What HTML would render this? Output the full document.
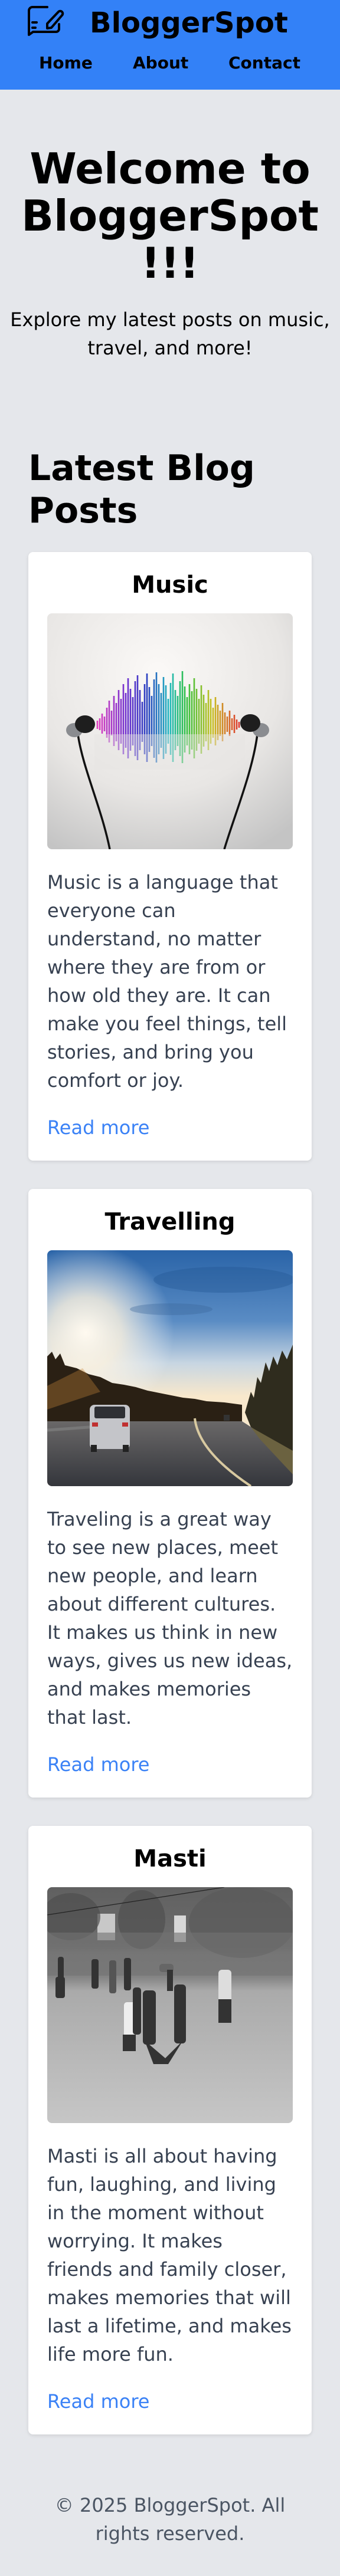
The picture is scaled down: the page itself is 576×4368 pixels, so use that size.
<!DOCTYPE html>
<html><head><meta charset="utf-8">
<style>
*{box-sizing:border-box}
html,body{margin:0;padding:0}
body{width:576px;height:4368px;background:#e5e7eb;font-family:"DejaVu Sans","Liberation Sans",sans-serif;color:#000;overflow:hidden}
header{position:relative;height:152px;background:#3381f7}
.logo{position:absolute;left:40px;top:4px}
.title{position:absolute;left:152px;top:15px;font-size:48px;line-height:48px;font-weight:bold;margin:0}
.nav a{position:absolute;top:93px;font-size:28px;line-height:28px;font-weight:bold;color:#000;text-decoration:none}
.hero{padding:94px 16px 0;text-align:center}
.hero h1{margin:0;font-size:72px;line-height:80px;font-weight:bold}
.hero p{margin:32px 0 0;font-size:32px;line-height:48px}
.sec{padding:0 48px}
.sec>h2{margin:144px 0 34px;font-size:60px;line-height:72px;font-weight:bold}
.card{background:#fff;border-radius:8px;padding:32px;margin-bottom:48px;box-shadow:0 2px 6px rgba(0,0,0,.1)}
.card h3{margin:0 0 24px;text-align:center;font-size:40px;line-height:48px;font-weight:bold}
.card svg{display:block;border-radius:8px}
.card p{margin:32px 0 32px;font-size:32px;line-height:48px;color:#374151}
.card a{display:block;font-size:32px;line-height:48px;color:#3b82f6;text-decoration:none}
footer{padding:0 48px 48px;text-align:center;font-size:32px;line-height:48px;color:#4b5563}
</style></head><body>
<header>
<svg class="logo" width="80" height="70" viewBox="0 0 80 70" fill="none" stroke="#000" stroke-width="4" stroke-linecap="round" stroke-linejoin="round">
<path d="M40 8H15a6 6 0 0 0-6 6V55l7-5H55a5 5 0 0 0 5-5V37"/>
<path d="M40 44v-8L59 16a4.2 4.2 0 0 1 6 6L47 43z"/>
<path d="M15 34h7M15 43h5"/>
</svg>
<div class="title">BloggerSpot</div>
<div class="nav"><a style="left:66px">Home</a><a style="left:225px">About</a><a style="left:387px">Contact</a></div>
</header>
<div class="hero">
<h1>Welcome to BloggerSpot !!!</h1>
<p>Explore my latest posts on music, travel, and more!</p>
</div>
<div class="sec">
<h2>Latest Blog Posts</h2>

<div class="card">
<h3>Music</h3>
<svg width="416" height="400" viewBox="0 0 416 400">
<defs>
<radialGradient id="mbg" cx="45%" cy="25%" r="85%"><stop offset="0" stop-color="#fbf9f7"/><stop offset=".6" stop-color="#e8e6e4"/><stop offset="1" stop-color="#c4c4c4"/></radialGradient>
<linearGradient id="rb" gradientUnits="userSpaceOnUse" x1="85" y1="0" x2="328" y2="0"><stop offset="0" stop-color="#e040c0"/><stop offset=".2" stop-color="#7030d0"/><stop offset=".35" stop-color="#2840c0"/><stop offset=".5" stop-color="#20b8c0"/><stop offset=".62" stop-color="#30c040"/><stop offset=".8" stop-color="#c8c020"/><stop offset="1" stop-color="#e03030"/></linearGradient>
</defs>
<rect width="416" height="400" fill="url(#mbg)"/>
<path stroke="url(#rb)" stroke-width="2.6" d="M85 182V196M89 178V198M93 170V204M97 175V200M101 160V211M105 148V219M109 165V207M113 140V225M117 152V217M121 130V232M125 145V221M129 120V239M133 135V228M137 110V246M141 128V233M145 142V224M149 115V242M153 105V249M157 130V232M161 150V218M165 120V239M169 102V252M173 125V235M177 140V225M181 112V245M185 100V253M189 120V239M193 135V228M197 108V247M201 122V238M205 145V221M209 118V240M213 102V252M217 130V232M221 140V225M225 115V242M229 98V254M233 124V236M237 142V224M241 120V239M245 132V231M249 110V246M253 128V233M257 145V221M261 122V238M265 138V226M269 152V217M273 130V232M277 145V221M281 160V211M285 142V224M289 155V215M293 165V208M297 152V217M301 168V205M305 175V201M309 165V208M313 178V198M317 172V203M321 180V197M325 184V194"/>
<rect x="80" y="205" width="255" height="60" fill="#e6e4e2" opacity=".45"/>
<path d="M52 205C60 262 92 330 106 400" stroke="#111" stroke-width="3.5" fill="none"/>
<path d="M356 205C348 268 318 340 300 400" stroke="#111" stroke-width="3.5" fill="none"/>
<ellipse cx="46" cy="198" rx="14" ry="12" fill="#8a8c90"/>
<ellipse cx="64" cy="188" rx="17" ry="15" fill="#1e1e1e"/>
<ellipse cx="362" cy="198" rx="14" ry="12" fill="#8a8c90"/>
<ellipse cx="344" cy="186" rx="17" ry="15" fill="#1e1e1e"/>
</svg>
<p>Music is a language that everyone can understand, no matter where they are from or how old they are. It can make you feel things, tell stories, and bring you comfort or joy.</p>
<a>Read more</a>
</div>

<div class="card">
<h3>Travelling</h3>
<svg width="416" height="400" viewBox="0 0 416 400">
<defs>
<linearGradient id="sky" x1="0" y1="0" x2="0" y2="1"><stop offset="0" stop-color="#2a64a8"/><stop offset=".3" stop-color="#5a8cc4"/><stop offset=".48" stop-color="#c8d6e2"/><stop offset=".62" stop-color="#f8e8cc"/></linearGradient>
<radialGradient id="sun" cx="65" cy="140" r="150" gradientUnits="userSpaceOnUse"><stop offset="0" stop-color="#fffaf0"/><stop offset=".4" stop-color="#fff4e0" stop-opacity=".8"/><stop offset="1" stop-color="#fff" stop-opacity="0"/></radialGradient>
<linearGradient id="road" x1="0" y1="0" x2="0" y2="1"><stop offset="0" stop-color="#6a6868"/><stop offset="1" stop-color="#34363c"/></linearGradient>
</defs>
<rect width="416" height="400" fill="url(#sky)"/>
<rect width="416" height="300" fill="url(#sun)"/>
<ellipse cx="300" cy="50" rx="120" ry="22" fill="#1f528f" opacity=".35"/>
<ellipse cx="210" cy="100" rx="70" ry="10" fill="#3a6398" opacity=".35"/>
<path d="M0 180L8 172 14 185 22 175 30 195 50 200 70 210 90 215 110 225 130 228 150 232 170 238 190 242 210 246 230 250 250 252 270 256 300 258 330 262V292H0Z" fill="#2a2014"/>
<path d="M0 230L60 200 90 240 0 270Z" fill="#c98a3a" opacity=".35"/>
<path d="M335 275L345 240 350 250 356 215 362 225 370 190 376 205 383 180 390 195 398 170 406 185 416 160V360L380 330 345 300Z" fill="#2f2c1e"/>
<path d="M0 290H330L416 345V400H0Z" fill="url(#road)"/>
<path d="M0 305L140 295" stroke="#777" stroke-width="5"/>
<path d="M250 285C255 330 300 370 345 400" stroke="#d8c9a0" stroke-width="4" fill="none"/>
<path d="M345 300L416 340V380L360 320Z" fill="#6b6240"/>
<rect x="72" y="262" width="68" height="75" rx="8" fill="#c4c5c9"/>
<rect x="80" y="265" width="52" height="20" rx="3" fill="#2f3034"/>
<rect x="76" y="292" width="10" height="7" fill="#c03030"/><rect x="127" y="292" width="10" height="7" fill="#c03030"/>
<rect x="74" y="330" width="10" height="12" fill="#222"/><rect x="128" y="330" width="10" height="12" fill="#222"/>
<rect x="299" y="279" width="10" height="10" fill="#333"/>
</svg>
<p>Traveling is a great way to see new places, meet new people, and learn about different cultures. It makes us think in new ways, gives us new ideas, and makes memories that last.</p>
<a>Read more</a>
</div>

<div class="card">
<h3>Masti</h3>
<svg width="416" height="400" viewBox="0 0 416 400">
<defs>
<linearGradient id="mg" x1="0" y1="0" x2="0" y2="1"><stop offset="0" stop-color="#606060"/><stop offset=".25" stop-color="#6e6e6e"/><stop offset=".28" stop-color="#7c7c7c"/><stop offset=".38" stop-color="#838383"/><stop offset=".44" stop-color="#aaa"/><stop offset="1" stop-color="#c6c6c6"/></linearGradient>
</defs>
<rect width="416" height="400" fill="url(#mg)"/>
<rect x="85" y="45" width="30" height="45" fill="#c8c8c8"/>
<rect x="215" y="48" width="20" height="45" fill="#d8d8d8"/>
<ellipse cx="40" cy="50" rx="50" ry="40" fill="#4e4e4e" opacity=".7"/>
<ellipse cx="160" cy="55" rx="40" ry="50" fill="#505050" opacity=".7"/>
<ellipse cx="330" cy="60" rx="90" ry="60" fill="#5a5a5a" opacity=".7"/>
<path d="M0 47L300 0" stroke="#222" stroke-width="1.2"/>
<rect x="0" y="77" width="416" height="73" fill="#727272" opacity=".6"/>
<g fill="#333">
<rect x="18" y="118" width="10" height="40" rx="4"/><rect x="14" y="152" width="16" height="36" rx="4"/>
<rect x="75" y="122" width="12" height="50" rx="4"/>
<rect x="105" y="124" width="12" height="56" rx="4" fill="#555"/>
<rect x="130" y="120" width="12" height="55" rx="4"/>
<rect x="190" y="130" width="24" height="14" rx="5" fill="#666"/><rect x="203" y="140" width="10" height="36"/>
<rect x="290" y="140" width="22" height="80" rx="6" fill="#ddd"/><rect x="290" y="190" width="22" height="40"/>
<rect x="130" y="195" width="20" height="70" rx="5" fill="#eee"/><rect x="128" y="250" width="22" height="28"/>
<rect x="145" y="170" width="14" height="80" rx="5"/>
<rect x="162" y="175" width="22" height="92" rx="6"/>
<rect x="215" y="165" width="20" height="100" rx="6"/>
<path d="M165 260L200 290 230 260 205 300 180 300Z"/>
</g>
</svg>
<p>Masti is all about having fun, laughing, and living in the moment without worrying. It makes friends and family closer, makes memories that will last a lifetime, and makes life more fun.</p>
<a>Read more</a>
</div>
</div>
<footer><div style="padding-top:48px">© 2025 BloggerSpot. All rights reserved.</div></footer>
</body></html>
